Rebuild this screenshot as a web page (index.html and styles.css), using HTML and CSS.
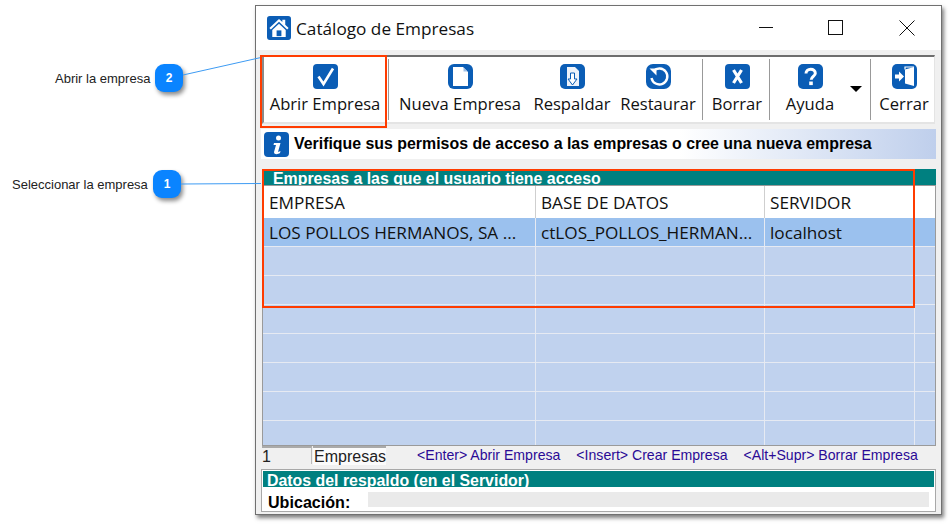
FILE: index.html
```html
<!DOCTYPE html>
<html lang="es">
<head>
<meta charset="utf-8">
<title>Catálogo de Empresas</title>
<link rel="stylesheet" href="styles.css">
</head>
<body>
<div class="desktop">
  <svg class="leaders" width="951" height="524" viewBox="0 0 951 524">
    <line x1="183" y1="75" x2="261" y2="57.5"/>
    <line x1="181" y1="184" x2="261" y2="183.5"/>
  </svg>
  <span class="note note-a">Abrir la empresa</span>
  <span class="badge badge-a">2</span>
  <span class="note note-b">Seleccionar la empresa</span>
  <span class="badge badge-b">1</span>

  <section class="window">
    <header class="titlebar">
      <svg class="title-icon" viewBox="0 0 25 25"><rect width="25" height="25" rx="3" fill="#0b5db5"/><path d="M12.500 3 2.500 12.500 4 14 12.500 6 21 14 22.500 12.500 19 9V4h-3v2.200Z" fill="#fff"/><path d="M5.500 14.500 12.500 8l7 6.500V22h-14Z" fill="#fff"/><rect x="10" y="15" width="5" height="6" fill="#0b5db5"/></svg>
      <h1 class="title">Catálogo de Empresas</h1>
      <div class="win-controls">
        <span class="win-btn"><svg width="16" height="16" viewBox="0 0 16 16"><path d="M2 7.500h14" stroke="#111" fill="none"/></svg></span>
        <span class="win-btn"><svg width="16" height="16" viewBox="0 0 16 16"><rect x=".5" y=".5" width="14" height="14" stroke="#111" fill="none"/></svg></span>
        <span class="win-btn"><svg width="16" height="16" viewBox="0 0 16 16"><path d="M.5.500l15 15M15.500.500l-15 15" stroke="#111" fill="none"/></svg></span>
      </div>
    </header>

    <div class="content">
      <nav class="toolbar">
        <div class="tool tool-open">
          <svg class="icon" viewBox="0 0 25 25"><rect width="25" height="25" rx="4" fill="#0b5db5"/><path d="M5.500 12.500 10.500 20 20 4.500" fill="none" stroke="#fff" stroke-width="2.600"/></svg>
          <span class="tool-label">Abrir Empresa</span>
        </div>
        <div class="tool tool-new">
          <svg class="icon" viewBox="0 0 25 25"><rect width="25" height="25" rx="6" fill="#0b5db5"/><path d="M5 3h10l5 5v14H5Z" fill="#fff"/><path d="M15.500 3.500v4h4Z" fill="#9fc0e6"/></svg>
          <span class="tool-label">Nueva Empresa</span>
        </div>
        <div class="tool tool-backup">
          <svg class="icon" viewBox="0 0 25 25"><rect width="25" height="25" rx="5" fill="#0b5db5"/><path d="M7 3h8l4 4v15H7Z" fill="#eef3fa"/><path d="M10.500 9h4v6h2.500L12.500 21 8 15h2.500Z" fill="#fff" stroke="#0b5db5"/></svg>
          <span class="tool-label">Respaldar</span>
        </div>
        <div class="tool tool-restore">
          <svg class="icon" viewBox="0 0 25 25"><rect width="25" height="25" rx="7" fill="#0b5db5"/><path d="M7.500 7A8 8 0 1 1 5.500 14" fill="none" stroke="#fff" stroke-width="2.400"/><path d="M3.500 4.500h7v7Z" fill="#fff"/></svg>
          <span class="tool-label">Restaurar</span>
        </div>
        <div class="tool tool-delete">
          <svg class="icon" viewBox="0 0 25 25"><rect width="25" height="25" rx="4" fill="#0b5db5"/><path d="M8.500 6 16.500 19M16.500 6 8.500 19" stroke="#fff" stroke-width="3.200" fill="none"/></svg>
          <span class="tool-label">Borrar</span>
        </div>
        <div class="tool tool-help">
          <svg class="icon" viewBox="0 0 25 25"><rect width="25" height="25" rx="5" fill="#0b5db5"/><path d="M8 9.500C8 6.800 10 5.200 12.700 5.200 15.400 5.200 17.300 6.800 17.300 9.200 17.300 12.300 13.200 12.500 13.200 15.800" fill="none" stroke="#fff" stroke-width="3"/><rect x="11.200" y="17.500" width="3.600" height="3.600" fill="#fff"/></svg>
          <span class="tool-label">Ayuda</span>
          <span class="caret"></span>
        </div>
        <div class="tool tool-close">
          <svg class="icon" viewBox="0 0 25 25"><rect width="25" height="25" rx="5" fill="#0b5db5"/><path d="M13 5.500 22 3v19l-9-2.500Z" fill="#fff"/><path d="M13 5.500V3h9" fill="none" stroke="#fff" stroke-width="1.200"/><path d="M3 10.500h4V7.500l5 5-5 5v-3H3Z" fill="#fff"/></svg>
          <span class="tool-label">Cerrar</span>
        </div>
      </nav>

      <div class="infobar">
        <svg class="icon" viewBox="0 0 25 25"><rect width="25" height="25" rx="4" fill="#0b5db5"/><circle cx="14.500" cy="6" r="2.500" fill="#fff"/><path d="M10 11h6.500L14 20l2.500-1-.5 2c-2 1.500-6 2-6-1L12 13h-2.500Z" fill="#fff"/></svg>
        <strong class="info-text">Verifique sus permisos de acceso a las empresas o cree una nueva empresa</strong>
      </div>

      <h2 class="band band-grid">Empresas a las que el usuario tiene acceso</h2>
      <div class="grid">
        <div class="row row-head"><span class="cell c1">EMPRESA</span><span class="cell c2">BASE DE DATOS</span><span class="cell c3">SERVIDOR</span><span class="cell c4"></span></div>
        <div class="row row-sel"><span class="cell c1">LOS POLLOS HERMANOS, SA ...</span><span class="cell c2">ctLOS_POLLOS_HERMAN...</span><span class="cell c3">localhost</span><span class="cell c4"></span></div>
        <div class="row"><span class="cell c1"></span><span class="cell c2"></span><span class="cell c3"></span><span class="cell c4"></span></div>
        <div class="row"><span class="cell c1"></span><span class="cell c2"></span><span class="cell c3"></span><span class="cell c4"></span></div>
        <div class="row"><span class="cell c1"></span><span class="cell c2"></span><span class="cell c3"></span><span class="cell c4"></span></div>
        <div class="row"><span class="cell c1"></span><span class="cell c2"></span><span class="cell c3"></span><span class="cell c4"></span></div>
        <div class="row"><span class="cell c1"></span><span class="cell c2"></span><span class="cell c3"></span><span class="cell c4"></span></div>
        <div class="row"><span class="cell c1"></span><span class="cell c2"></span><span class="cell c3"></span><span class="cell c4"></span></div>
        <div class="row row-last"><span class="cell c1"></span><span class="cell c2"></span><span class="cell c3"></span><span class="cell c4"></span></div>
      </div>

      <div class="statusbar">
        <span class="count">1</span>
        <span class="count-label">Empresas</span>
        <span class="hint hint-a">&lt;Enter&gt; Abrir Empresa</span>
        <span class="hint hint-b">&lt;Insert&gt; Crear Empresa</span>
        <span class="hint hint-c">&lt;Alt+Supr&gt; Borrar Empresa</span>
      </div>

      <div class="panel">
        <h2 class="band band-panel">Datos del respaldo (en el Servidor)</h2>
        <div class="location">
          <strong class="location-label">Ubicación:</strong>
          <span class="location-field"></span>
        </div>
      </div>
    </div>

    <div class="mark mark-open"></div>
    <div class="mark mark-grid"></div>
  </section>
</div>
</body>
</html>
```

FILE: styles.css
```css
* { box-sizing: border-box; }
html, body { margin: 0; padding: 0; background: #fff; }
.desktop { position: relative; width: 951px; height: 524px; overflow: hidden; font-family: "Liberation Sans", Arial, sans-serif; }
.leaders { position: absolute; left: 0; top: 0; z-index: 2; pointer-events: none; }
.leaders line { stroke: #3d9bf3; stroke-width: 1; }
.note { position: absolute; font-size: 13px; line-height: 14px; color: #222; }
.note-a { left: 55px; top: 72px; }
.note-b { left: 12px; top: 178px; }
.badge { position: absolute; width: 28px; height: 28px; border-radius: 9px; background: #0a84ff; color: #fff; font-size: 12px; font-weight: bold; line-height: 28px; text-align: center; box-shadow: 2px 3px 4px rgba(0,0,0,.45); }
.badge-a { left: 155px; top: 64px; }
.badge-b { left: 153px; top: 170px; }

.window { position: absolute; left: 255px; top: 5px; width: 687px; height: 510px; border: 1px solid #707070; background: #f0f0f0; box-shadow: 2px 3px 4px rgba(0,0,0,.5); display: flex; flex-direction: column; }
.titlebar { height: 44px; background: #fff; display: flex; align-items: center; padding-left: 11px; flex: none; }
.title-icon { width: 24px; height: 24px; margin-right: 5px; }
.title { margin: 0; font: 400 17.200px "Open Sans", sans-serif; color: #111; }
.win-controls { margin-left: auto; display: flex; gap: 1px; }
.win-btn { width: 70px; padding-left: 2px; display: flex; justify-content: center; }

.content { flex: 1; display: flex; flex-direction: column; padding: 5px 5px 0 5px; }
.toolbar { height: 69px; margin-left: 1px; width: 673px; background: #fff; border-top: 2px solid #6e6e6e; border-left: 2px solid #8a8a8a; border-right: 1px solid #e4e4e4; border-bottom: 2px solid #e4e4e4; display: flex; flex: none; padding: 2px 0; }
.tool { position: relative; display: flex; flex-direction: column; align-items: center; padding-top: 5px; flex: none; }
.tool-open { width: 122px; }
.tool-new { width: 142px; margin-left: 2px; padding-left: 1px; border-left: 1px solid #999; }
.tool-backup { width: 84px; }
.tool-restore { width: 89px; border-right: 1px solid #999; }
.tool-delete { width: 67px; padding-left: 2px; border-right: 1px solid #999; }
.tool-help { width: 101px; padding-right: 20px; border-right: 1px solid #999; }
.tool-close { width: 63px; padding-left: 3px; }
.icon { width: 25px; height: 25px; flex: none; display: block; }
.tool-label { font: 400 16.600px/22px "Open Sans", sans-serif; color: #111; margin-top: 4px; white-space: nowrap; }
.caret { position: absolute; right: 8px; top: 27px; width: 0; height: 0; border-left: 6px solid transparent; border-right: 6px solid transparent; border-top: 6px solid #000; }

.infobar { height: 30px; margin-top: 5px; width: 675px; background: linear-gradient(90deg, #fff 0, #fff 62%, #bfcfec 100%); display: flex; align-items: center; padding-left: 3px; gap: 5px; flex: none; }
.info-text { font-size: 15.900px; font-weight: bold; color: #000; white-space: nowrap; }

.band { margin: 0; background: #008080; color: #fff; font-weight: bold; white-space: nowrap; }
.band-grid { margin-top: 10px; height: 16px; font-size: 15.900px; line-height: 19px; padding-left: 11px; margin-left: 1px; width: 674px; flex: none; }
.grid { position: relative; margin-left: 1px; width: 674px; height: 261px; border: 1px solid #9a9a9a; background: #c0d2ee; overflow: hidden; flex: none; }
.row { display: flex; height: 29px; border-bottom: 1px solid #e6eaf2; }
.row-head { height: 32px; background: #fff; border-bottom: 0; }
.row-sel { background: #9bc1ee; }
.cell { display: block; height: 100%; border-right: 1px solid #e6eaf2; font: 400 17.200px/33px "Open Sans", sans-serif; color: #111; padding-left: 6px; white-space: nowrap; overflow: hidden; flex: none; }
.row-sel .cell { line-height: 29px; }
.row-head .cell { border-right-color: #cfcfcf; }
.c1 { width: 273px; }
.c2 { width: 229px; padding-left: 5px; }
.c3 { width: 150px; padding-left: 5px; }
.c4 { flex: 1; border-right: 0; }

.statusbar { height: 19px; margin-left: 1px; width: 674px; display: flex; align-items: flex-start; flex: none; }
.count { width: 50px; height: 18px; font-size: 16px; line-height: 17px; color: #222; border-top: 2px solid #aaa; border-right: 1px solid #bbb; background: #f0f0f0; }
.count-label { width: 73px; height: 19px; margin-left: 1px; font-size: 16px; line-height: 17px; color: #222; border-top: 2px solid #aaa; background: #fbfbfb; padding-left: 1px; }
.hint { font-size: 14.100px; line-height: 16px; color: #2a0a96; white-space: nowrap; margin-top: 1px; }
.hint-a { margin-left: 31px; }
.hint-b { margin-left: 16px; }
.hint-c { margin-left: 16px; }

.panel { margin-top: 4px; width: 675px; height: 43px; border: 1px solid #a8a8a8; background: #fff; padding: 1px; flex: none; }
.band-panel { height: 16px; font-size: 15.900px; line-height: 19px; padding-left: 4px; }
.location { position: relative; background: #fff; display: flex; align-items: center; height: 24px; padding-left: 5px; padding-top: 1px; }
.location-label { font-size: 16.100px; line-height: 18px; color: #000; width: 100px; flex: none; padding-top: 5px; }
.location-field { width: 561px; height: 15px; background: #eaeaea; flex: none; }

.mark { position: absolute; border: 2px solid #ff3c00; z-index: 3; }
.mark-open { left: 4px; top: 49px; width: 127px; height: 73px; }
.mark-grid { left: 6px; top: 163px; width: 653px; height: 139px; }
```
